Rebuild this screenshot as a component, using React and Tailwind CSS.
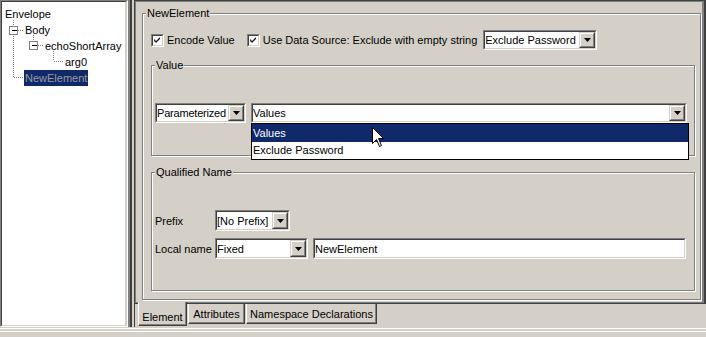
import React from 'react';

const tree = [
  { label: 'Envelope', pad: 'pl-[2px]' },
  { label: 'Body', pad: 'pl-[22px]' },
  { label: 'echoShortArray', pad: 'pl-[42px]' },
  { label: 'arg0', pad: 'pl-[62px]' },
  { label: 'NewElement', pad: 'pl-[22px]', selected: true },
];

function TreeLines() {
  // coordinates are page pixels minus the 2px tree border
  const dot = { stroke: '#808080', strokeDasharray: '1 1', shapeRendering: 'crispEdges' };
  return (
    <svg className="absolute left-0 top-0" width="120" height="90">
      <line x1="11.5" y1="18" x2="11.5" y2="76" {...dot} />
      <line x1="16" y1="28.5" x2="22" y2="28.5" {...dot} />
      <line x1="31.5" y1="33" x2="31.5" y2="40" {...dot} />
      <line x1="36" y1="43.5" x2="42" y2="43.5" {...dot} />
      <line x1="51.5" y1="49" x2="51.5" y2="59" {...dot} />
      <line x1="52" y1="59.5" x2="62" y2="59.5" {...dot} />
      <line x1="12" y1="75.5" x2="23" y2="75.5" {...dot} />
      <rect x="7.5" y="24.5" width="8" height="8" fill="#fff" stroke="#808080" shapeRendering="crispEdges" />
      <line x1="9.5" y1="28.5" x2="14.5" y2="28.5" stroke="#000" shapeRendering="crispEdges" />
      <rect x="27.5" y="39.5" width="8" height="8" fill="#fff" stroke="#808080" shapeRendering="crispEdges" />
      <line x1="29.5" y1="43.5" x2="34.5" y2="43.5" stroke="#000" shapeRendering="crispEdges" />
    </svg>
  );
}

function Group({ title, className, children }) {
  return (
    <div className={`relative border border-[#808080] shadow-[inset_1px_1px_0_#fff,1px_1px_0_#fff] ${className}`}>
      <span className="absolute -top-[8px] left-[3px] px-[1px] bg-[#d4d0c8] leading-[14px] whitespace-nowrap">{title}</span>
      {children}
    </div>
  );
}

function Sunken({ className, children }) {
  return (
    <div className={`border border-t-[#808080] border-l-[#808080] border-b-white border-r-white ${className}`}>
      <div className="h-full border border-t-[#404040] border-l-[#404040] border-b-[#d4d0c8] border-r-[#d4d0c8] bg-white flex items-center overflow-hidden">
        {children}
      </div>
    </div>
  );
}

function ArrowButton() {
  return (
    <div className="w-[16px] h-full shrink-0 border border-t-[#d4d0c8] border-l-[#d4d0c8] border-b-[#404040] border-r-[#404040]">
      <div className="h-full border border-t-white border-l-white border-b-[#808080] border-r-[#808080] bg-[#d4d0c8] flex items-center justify-center">
        <svg width="7" height="4" viewBox="0 0 7 4">
          <path d="M0 0H7L3.5 4Z" fill="#000" />
        </svg>
      </div>
    </div>
  );
}

function Combo({ value, className }) {
  return (
    <Sunken className={className}>
      <span className="flex-1 whitespace-nowrap overflow-hidden leading-[14px]">{value}</span>
      <ArrowButton />
    </Sunken>
  );
}

function Check({ label }) {
  return (
    <div className="flex items-center gap-[3px]">
      <Sunken className="w-[13px] h-[13px]">
        <svg width="9" height="9" viewBox="0 0 9 9" className="mx-auto">
          <path d="M1 3L3 5L7 1V3L3 7L1 5Z" fill="#222" />
        </svg>
      </Sunken>
      <span className="leading-[14px] whitespace-nowrap">{label}</span>
    </div>
  );
}

export default function App() {
  return (
    <div className="w-[706px] h-[337px] overflow-hidden bg-[#d4d0c8] text-black text-[11px] font-['Liberation_Sans',Arial,sans-serif] flex flex-col">
      <div className="h-[327px] flex">
        {/* tree */}
        <div className="w-[128px] h-full border-l border-t border-[#808080] border-r border-r-white border-b border-b-white">
          <div className="relative h-full bg-white border-l border-t border-[#404040] border-r-2 border-r-[#d4d0c8] border-b border-b-[#d4d0c8] pt-[4px]">
            <TreeLines />
            {tree.map((n) => (
              <div key={n.label} className={`relative h-[16px] flex items-center ${n.pad}`}>
                <span
                  className={`px-[1px] leading-[16px] whitespace-nowrap ${
                    n.selected ? 'bg-[#10296b] text-[#9a9a9a]' : ''
                  }`}
                >
                  {n.label}
                </span>
              </div>
            ))}
          </div>
        </div>
        <div className="w-[2px] bg-[#808080]" />
        <div className="w-[2px] bg-[#404040]" />
        <div className="w-[2px]" />

        {/* editor */}
        <div className="flex-1 flex flex-col border-l border-[#404040]">
          <div className="h-[304px] border-t border-r-2 border-b border-[#404040]">
            <div className="h-full border-t border-l border-r-2 border-b border-[#808080] pt-[11px] pl-[6px]">
              <Group title="NewElement" className="w-[559px] h-[287px] pt-[16px] pl-[8px]">
                <div className="h-[20px] flex items-center">
                  <Check label="Encode Value" />
                  <div className="ml-[12px]">
                    <Check label="Use Data Source: Exclude with empty string" />
                  </div>
                  <Combo value="Exclude Password" className="ml-[6px] w-[114px] h-[20px]" />
                </div>

                <Group title="Value" className="mt-[15px] w-[544px] h-[91px] pt-[37px] pl-[3px]">
                  <div className="flex items-start gap-[5px]">
                    <Combo value="Parameterized" className="w-[91px] h-[20px] tracking-[-0.2px]" />
                    <div className="relative">
                      <Combo value="Values" className="w-[436px] h-[20px]" />
                      <div className="absolute z-20 top-[20px] left-0 w-[438px] h-[37px] bg-white border border-black">
                        <div className="h-[18px] bg-[#10296b] text-white leading-[18px] pl-[1px]">Values</div>
                        <div className="h-[17px] leading-[17px] pl-[1px]">Exclude Password</div>
                        <svg className="absolute left-[120px] top-[3px]" width="13" height="21" viewBox="0 0 13 21">
                          <path
                            d="M0.5 0.5V16.5L4.5 12.5L7.5 19.5L9.5 18.5L6.5 11.5H11.5Z"
                            fill="#fff"
                            stroke="#000"
                            strokeLinejoin="miter"
                          />
                        </svg>
                      </div>
                    </div>
                  </div>
                </Group>

                <Group title="Qualified Name" className="mt-[16px] w-[544px] h-[119px] pt-[37px] pl-[3px]">
                  <div className="flex flex-col gap-[7px]">
                    <div className="h-[21px] flex items-center">
                      <span className="w-[60px] leading-[14px]">Prefix</span>
                      <Combo value="[No Prefix]" className="w-[75px] h-[21px]" />
                    </div>
                    <div className="h-[21px] flex items-center">
                      <span className="w-[60px] leading-[14px] whitespace-nowrap">Local name</span>
                      <Combo value="Fixed" className="w-[93px] h-[21px]" />
                      <Sunken className="ml-[5px] w-[373px] h-[21px]">
                        <span className="leading-[14px]">NewElement</span>
                      </Sunken>
                    </div>
                  </div>
                </Group>
              </Group>
            </div>
          </div>

          {/* tabs */}
          <div className="h-[23px] flex items-start pl-[3px]">
            <div className="relative z-10 -mt-[2px] w-[49px] h-[24px] bg-[#d4d0c8] border-l border-l-white border-r border-b border-r-[#404040] border-b-[#404040] shadow-[inset_-1px_-1px_0_#808080] pt-[8px] text-center leading-[14px]">
              Element
            </div>
            <div className="ml-[1px] w-[57px] h-[20px] border-l border-l-white border-r border-b border-r-[#404040] border-b-[#404040] shadow-[inset_-1px_-1px_0_#808080] pt-[3px] text-center leading-[14px]">
              Attributes
            </div>
            <div className="ml-[1px] w-[131px] h-[20px] border-l border-l-white border-r border-b border-r-[#404040] border-b-[#404040] shadow-[inset_-1px_-1px_0_#808080] pt-[3px] text-center leading-[14px] whitespace-nowrap">
              Namespace Declarations
            </div>
          </div>
        </div>
      </div>

      <div className="h-[10px] pt-[1px]">
        <div className="border-t border-white" />
        <div className="mt-[2px] border-t border-white" />
      </div>
    </div>
  );
}
